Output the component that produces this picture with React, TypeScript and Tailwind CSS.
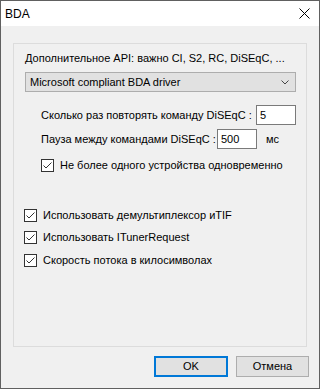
import React from 'react';

const font = { fontFamily: '"Liberation Sans", Arial, sans-serif' };

const Check: React.FC<{ label: string; className?: string }> = ({ label, className = '' }) => (
  <div className={`flex items-center h-[13px] ${className}`}>
    <span className="w-[13px] h-[13px] shrink-0 border border-[#333333] bg-white flex items-center justify-center">
      <svg width="11" height="11" viewBox="0 0 11 11">
        <path d="M1.5 5.5 L4 8 L9.5 2.5" fill="none" stroke="#333" strokeWidth="1" />
      </svg>
    </span>
    <span className="ml-[6px] text-[11px] leading-[13px] text-black whitespace-nowrap">{label}</span>
  </div>
);

const App: React.FC = () => {
  return (
    <div
      className="w-[320px] h-[389px] border border-[#606060] bg-[#f0f0f0] flex flex-col overflow-hidden"
      style={font}
    >
      {/* Title bar */}
      <div className="h-[25px] bg-white flex items-center justify-between shrink-0">
        <span className="ml-[4px] text-[12px] text-black">BDA</span>
        <svg className="mr-[9px]" width="11" height="11" viewBox="0 0 11 11">
          <path d="M0.5 0.5 L10.5 10.5 M10.5 0.5 L0.5 10.5" stroke="#000" strokeWidth="1" />
        </svg>
      </div>

      {/* Group box */}
      <div className="mt-[17px] ml-[12px] w-[294px] h-[304px] border border-[#dcdcdc] pl-[11px] pt-[8px] flex flex-col">
        <div className="text-[11px] leading-[13px] text-black whitespace-nowrap">
          Дополнительное API: важно CI, S2, RC, DiSEqC, ...
        </div>

        <div className="mt-[7px] w-[271px] h-[20px] bg-[#e1e1e1] border border-[#adadad] flex items-center justify-between">
          <span className="ml-[4px] text-[11px] text-black">Microsoft compliant BDA driver</span>
          <svg className="mr-[6px]" width="8" height="5" viewBox="0 0 8 5">
            <path d="M0.5 0.5 L4 4 L7.5 0.5" fill="none" stroke="#444" strokeWidth="1" />
          </svg>
        </div>

        <div className="mt-[13px] ml-[16px] flex items-center">
          <span className="w-[215px] text-[11px] text-black whitespace-nowrap">Сколько раз повторять команду DiSEqC :</span>
          <span className="w-[40px] h-[20px] bg-white border border-[#7a7a7a] text-[11px] pl-[3px] flex items-center">5</span>
        </div>

        <div className="mt-[4px] ml-[16px] flex items-center">
          <span className="w-[176px] text-[11px] text-black whitespace-nowrap">Пауза между командами DiSEqC :</span>
          <span className="w-[40px] h-[20px] bg-white border border-[#7a7a7a] text-[11px] pl-[3px] flex items-center">500</span>
          <span className="ml-[9px] text-[11px] text-black">мс</span>
        </div>

        <Check className="mt-[10px] ml-[16px]" label="Не более одного устройства одновременно" />

        <Check className="mt-[37px] ml-[-1px]" label="Использовать демультиплексор иTIF" />
        <Check className="mt-[9px] ml-[-1px]" label="Использовать ITunerRequest" />
        <Check className="mt-[10px] ml-[-1px]" label="Скорость потока в килосимволах" />
      </div>

      {/* Buttons */}
      <div className="mt-[9px] ml-[153px] flex gap-[8px]">
        <button className="w-[74px] h-[21px] bg-[#e1e1e1] border-2 border-[#0078d7] text-[11px] text-black">
          OK
        </button>
        <button className="w-[73px] h-[21px] bg-[#e1e1e1] border border-[#adadad] text-[11px] text-black">
          Отмена
        </button>
      </div>
    </div>
  );
};

export default App;
